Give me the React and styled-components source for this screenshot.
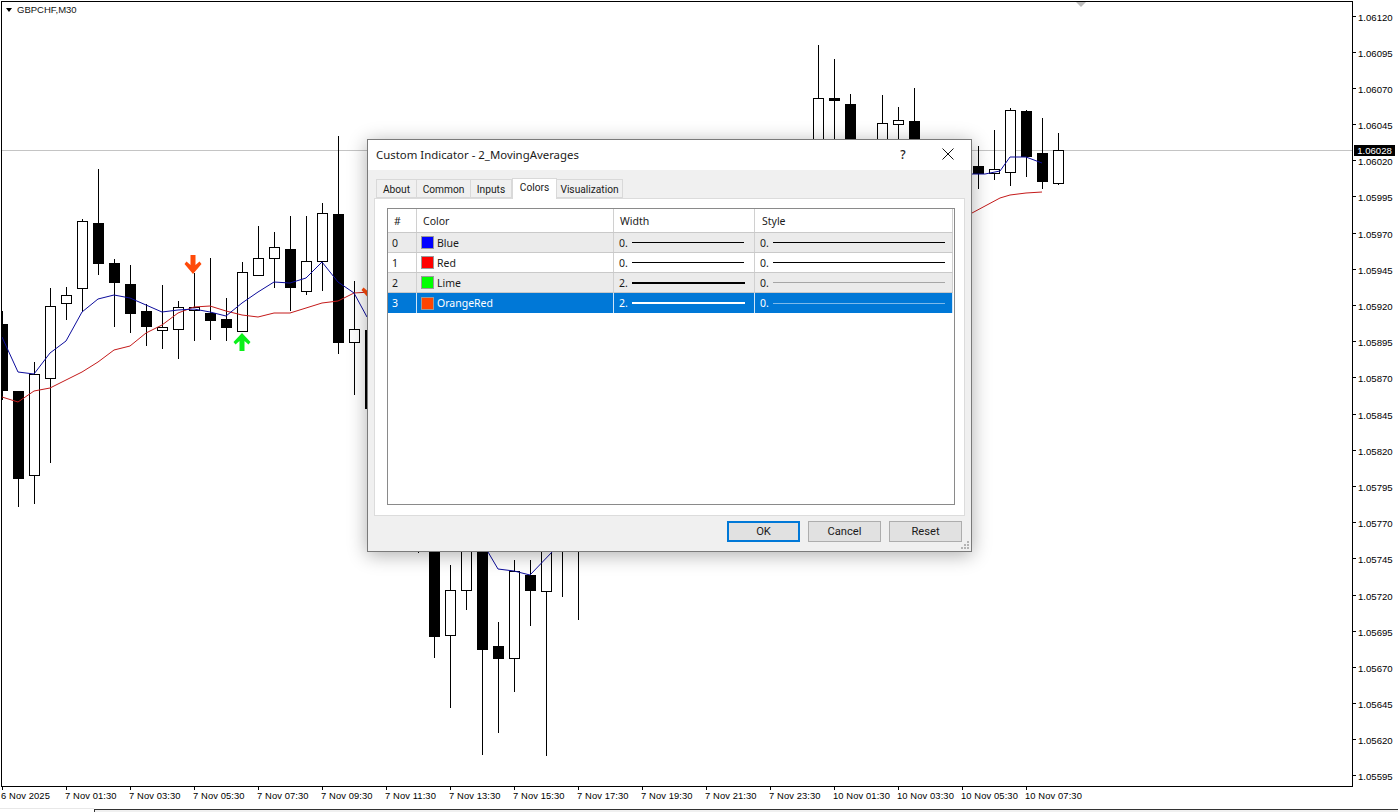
import React from 'react';
import styled, { createGlobalStyle } from 'styled-components';

const ChartFont = `"Liberation Sans", Arial, sans-serif`;
const DialogFont = `"Noto Sans", "Open Sans", sans-serif`;
const TabFont = `Roboto, "Noto Sans", sans-serif`;

const GlobalStyle = createGlobalStyle`
  html, body {
    margin: 0;
    padding: 0;
    background: #fff;
    overflow: hidden;
  }
`;

// x, high, body top, body bottom, low, filled
const candles = [
  [2, 311, 324, 391, 400, 1],
  [18, 391, 391, 479, 507, 1],
  [34, 362, 374, 475, 504, 0],
  [50, 288, 306, 378, 463, 0],
  [66, 287, 295, 303, 320, 0],
  [82, 219, 221, 288, 312, 0],
  [98, 169, 223, 264, 275, 1],
  [114, 259, 263, 283, 327, 1],
  [130, 265, 284, 314, 333, 1],
  [146, 304, 311, 327, 346, 1],
  [162, 285, 327, 330, 349, 0],
  [178, 301, 307, 329, 359, 0],
  [194, 273, 307, 310, 341, 0],
  [210, 258, 313, 321, 340, 1],
  [226, 298, 319, 328, 341, 1],
  [242, 262, 272, 331, 331, 0],
  [258, 226, 258, 275, 275, 0],
  [274, 232, 247, 258, 288, 0],
  [290, 216, 249, 288, 311, 1],
  [306, 216, 261, 291, 295, 0],
  [322, 203, 213, 261, 291, 0],
  [338, 136, 214, 343, 354, 1],
  [354, 281, 329, 342, 395, 0],
  [370, 320, 330, 409, 420, 1],
  [418, 500, 510, 520, 553, 0],
  [434, 500, 510, 637, 658, 1],
  [450, 565, 590, 635, 708, 0],
  [466, 500, 510, 590, 610, 0],
  [482, 500, 510, 650, 755, 1],
  [498, 622, 646, 659, 733, 1],
  [514, 560, 571, 658, 692, 0],
  [530, 560, 575, 591, 626, 1],
  [546, 500, 510, 591, 756, 0],
  [562, 500, 510, 520, 597, 0],
  [578, 500, 510, 520, 620, 0],
  [818, 45, 98, 200, 210, 0],
  [834, 59, 98, 101, 200, 1],
  [850, 94, 104, 200, 210, 1],
  [882, 95, 123, 200, 210, 0],
  [898, 107, 120, 124, 200, 0],
  [914, 88, 121, 200, 210, 1],
  [978, 146, 166, 174, 189, 1],
  [994, 130, 169, 173, 180, 0],
  [1010, 108, 110, 172, 186, 0],
  [1026, 110, 111, 157, 177, 1],
  [1042, 118, 153, 182, 189, 1],
  [1058, 133, 150, 183, 185, 0],
];

const blueLine =
  '2,337 18,372 34,374 50,353 66,341 82,312 98,299 114,295 130,298 146,305 162,312 178,310 194,309 210,312 226,316 242,303 258,292 274,282 290,283 306,278 322,262 338,282 354,293 367,317';
const blueLow = '488,552 498,569 514,571 530,575 553,551';
const blueRight = '972,174 985,174 1000,171 1010,157 1026,157 1042,163';
const redLine =
  '2,397 18,402 34,391 50,388 66,380 82,372 98,362 114,350 130,346 146,333 162,325 178,313 194,307 210,306 226,311 242,315 258,317 274,313 290,313 306,308 322,303 338,301 354,293 370,292';
const redRight = '972,213 1000,198 1010,195 1026,193 1042,192';

const prices = [
  '1.06120', '1.06095', '1.06070', '1.06045', '1.06020', '1.05995', '1.05970', '1.05945',
  '1.05920', '1.05895', '1.05870', '1.05845', '1.05820', '1.05795', '1.05770', '1.05745',
  '1.05720', '1.05695', '1.05670', '1.05645', '1.05620', '1.05595',
];

const times = [
  '6 Nov 2025', '7 Nov 01:30', '7 Nov 03:30', '7 Nov 05:30', '7 Nov 07:30', '7 Nov 09:30',
  '7 Nov 11:30', '7 Nov 13:30', '7 Nov 15:30', '7 Nov 17:30', '7 Nov 19:30', '7 Nov 21:30',
  '7 Nov 23:30', '10 Nov 01:30', '10 Nov 03:30', '10 Nov 05:30', '10 Nov 07:30',
];

const tabs = ['About', 'Common', 'Inputs', 'Colors', 'Visualization'];
const tabWidths = [41, 54, 41, 45, 66];

const rows = [
  { color: 'Blue', swatch: '#0000ff', width: '0.', style: '0.', weight: 1, thin: false },
  { color: 'Red', swatch: '#ff0000', width: '0.', style: '0.', weight: 1, thin: false },
  { color: 'Lime', swatch: '#00ff00', width: '2.', style: '0.', weight: 2, thin: true },
  { color: 'OrangeRed', swatch: '#ff4500', width: '2.', style: '0.', weight: 2, thin: true },
];

const Page = styled.div`
  position: relative;
  width: 1398px;
  height: 812px;
  padding: 1px 0 0 1px;
  box-sizing: border-box;
  display: flex;
  flex-direction: column;
  overflow: hidden;
  background: #fff;
  font-family: ${ChartFont};
`;

const ChartRow = styled.div`
  display: flex;
  height: 786px;
  flex: none;
`;

const Plot = styled.div`
  position: relative;
  width: 1352px;
  flex: none;
  box-sizing: border-box;
  border: 1px solid #000;
  svg {
    display: block;
  }
`;

const SymbolLabel = styled.div`
  position: absolute;
  left: 4px;
  top: 2px;
  display: flex;
  align-items: center;
  gap: 5px;
  font-size: 9.5px;
  line-height: 12px;
  color: #111;
`;

const SymbolArrow = styled.span`
  width: 0;
  height: 0;
  border-left: 3.5px solid transparent;
  border-right: 3.5px solid transparent;
  border-top: 4px solid #000;
`;

const PriceAxis = styled.div`
  display: flex;
  flex-direction: column;
  padding-top: 10.5px;
`;

const PriceLabel = styled.div`
  position: relative;
  flex: none;
  height: 36.2px;
  line-height: 12px;
  padding-left: 5px;
  font-size: 9.6px;
  color: #000;
  &::before {
    content: '';
    position: absolute;
    left: 0;
    top: 4px;
    width: 3px;
    height: 1px;
    background: #000;
  }
`;

const PriceMarker = styled.div`
  position: absolute;
  left: 1354px;
  top: 145px;
  width: 41px;
  height: 11px;
  background: #000;
  color: #fff;
  font-size: 9.6px;
  line-height: 11px;
  text-align: center;
`;

const TimeAxis = styled.div`
  display: flex;
  height: 21px;
  flex: none;
`;

const TimeLabel = styled.div`
  position: relative;
  width: 64px;
  flex: none;
  white-space: nowrap;
  padding-top: 3px;
  font-size: 9.4px;
  line-height: 12px;
  letter-spacing: 0.1px;
  color: #000;
  &::before {
    content: '';
    position: absolute;
    left: 1px;
    top: 0;
    width: 1px;
    height: 3px;
    background: #000;
  }
`;

const TabStrip = styled.div`
  display: flex;
  flex: 1;
  margin-left: -1px;
  background: #fff;
`;

const SheetTab = styled.div`
  width: 94px;
  flex: none;
  background: #fff;
  border-top: 1px solid #e8e8e8;
`;

const SheetRest = styled.div`
  flex: 1;
  margin-top: 1px;
  background: #f0f0f0;
  border-top: 1px solid #333;
  border-left: 1px solid #333;
`;

const Dialog = styled.div`
  position: absolute;
  left: 367px;
  top: 139px;
  width: 605px;
  height: 413px;
  box-sizing: border-box;
  display: flex;
  flex-direction: column;
  background: #f0f0f0;
  border: 1px solid #7a7a7a;
  box-shadow: 0 3px 18px rgba(0, 0, 0, 0.32);
  font-family: ${DialogFont};
  color: #1a1a1a;
`;

const TitleBar = styled.div`
  display: flex;
  align-items: center;
  height: 30px;
  flex: none;
  box-sizing: border-box;
  padding: 0 14px 2px 8px;
  background: #fff;
`;

const Title = styled.div`
  flex: 1;
  font-size: 11.4px;
  white-space: nowrap;
`;

const HelpButton = styled.div`
  width: 30px;
  font-size: 12px;
  font-weight: 500;
  text-align: center;
  margin-right: 24px;
`;

const CloseIcon = styled.svg`
  display: block;
  width: 12px;
  height: 12px;
  margin-right: 3px;
`;

const TabBar = styled.div`
  display: flex;
  align-items: flex-end;
  height: 28px;
  flex: none;
  padding-left: 8px;
  position: relative;
  z-index: 1;
`;

const Tab = styled.div`
  box-sizing: border-box;
  width: ${(p) => p.$width}px;
  height: ${(p) => (p.$active ? 21 : 19)}px;
  margin-bottom: ${(p) => (p.$active ? -1 : 0)}px;
  padding-top: ${(p) => (p.$active ? 1 : 2)}px;
  border: 1px solid #d9d9d9;
  border-bottom: ${(p) => (p.$active ? 'none' : '1px solid #d9d9d9')};
  border-left-width: ${(p) => (p.$first || p.$active ? 1 : 0)}px;
  background: ${(p) => (p.$active ? '#fff' : '#f0f0f0')};
  font-family: ${TabFont};
  font-size: 10.2px;
  line-height: 15px;
  text-align: center;
  white-space: nowrap;
`;

const TabPanel = styled.div`
  box-sizing: border-box;
  width: 591px;
  height: 318px;
  margin-left: 6px;
  padding: 9px 9px 10px 12px;
  background: #fff;
  border: 1px solid #dcdcdc;
  flex: none;
`;

const Table = styled.div`
  box-sizing: border-box;
  height: 297px;
  border: 1px solid #8a8a8a;
  background: #fff;
`;

const Row = styled.div`
  display: grid;
  grid-template-columns: 29px 197px 141px 198px;
  height: ${(p) => (p.$header ? 24 : 20)}px;
  box-sizing: border-box;
  border-bottom: ${(p) => (p.$last ? 'none' : '1px solid #c9c9c9')};
  width: 565px;
  background: ${(p) => (p.$selected ? '#0078d7' : p.$shaded ? '#ebebeb' : '#fff')};
  color: ${(p) => (p.$selected ? '#fff' : '#1a1a1a')};
`;

const Cell = styled.div`
  display: flex;
  align-items: center;
  min-width: 0;
  box-sizing: border-box;
  padding-left: ${(p) => p.$pad ?? 4}px;
  border-right: 1px solid ${(p) => (p.$selected ? '#cfe5f7' : '#d0d0d0')};
  font-size: 10.5px;
  white-space: nowrap;
`;

const Swatch = styled.span`
  box-sizing: border-box;
  width: 13px;
  height: 13px;
  flex: none;
  margin-right: 3px;
  background: ${(p) => p.$color};
  border: 1px solid #9a9a9a;
`;

const LineSample = styled.span`
  flex: none;
  margin-left: ${(p) => p.$gap}px;
  width: ${(p) => p.$width}px;
  height: ${(p) => p.$weight}px;
  background: ${(p) => p.$color};
`;

const Footer = styled.div`
  position: relative;
  flex: 1;
  display: flex;
  justify-content: flex-end;
  gap: 8px;
  padding: 5px 9px 0 0;
`;

const Button = styled.div`
  box-sizing: border-box;
  width: 73px;
  height: 21px;
  display: flex;
  align-items: center;
  justify-content: center;
  background: #e1e1e1;
  border: ${(p) => (p.$primary ? '2px solid #0078d7' : '1px solid #adadad')};
  font-family: ${TabFont};
  font-size: 11.2px;
`;

const Grip = styled.svg`
  position: absolute;
  right: 1px;
  bottom: 1px;
  width: 9px;
  height: 9px;
`;

const Candle = ({ c }) => {
  const [x, high, top, bottom, low, filled] = c;
  const cx = x + 0.5;
  return (
    <g shapeRendering="crispEdges">
      <line x1={cx} x2={cx} y1={high} y2={low} stroke="#000" />
      {filled ? (
        <rect x={cx - 5.5} y={top} width={11} height={bottom - top} fill="#000" />
      ) : (
        <rect x={cx - 5} y={top + 0.5} width={10} height={bottom - top} fill="#fff" stroke="#000" />
      )}
    </g>
  );
};

const DownArrow = ({ x, y }) => (
  <path
    transform={`translate(${x} ${y})`}
    d="M-2.5 0H2.5V10L6.5 6.5L8.5 9L0 19L-8.5 9L-6.5 6.5L-2.5 10Z"
    fill="#ff4a0a"
  />
);

const UpArrow = ({ x, y }) => (
  <path
    transform={`translate(${x} ${y})`}
    d="M-2.5 0H2.5V-10L6.5 -6.5L8.5 -9L0 -18L-8.5 -9L-6.5 -6.5L-2.5 -10Z"
    fill="#0bf01a"
  />
);

const Chart = () => (
  <svg width="1350" height="784" viewBox="2 2 1350 784">
    <line x1="2" x2="1352" y1="150.5" y2="150.5" stroke="#c4c4c4" />
    <polygon points="1076,2 1086,2 1081,7" fill="#bdbdbd" />
    {candles.map((c) => (
      <Candle key={c[0]} c={c} />
    ))}
    <g fill="none" strokeWidth="1">
      <polyline points={redLine} stroke="#c41a1a" />
      <polyline points={redRight} stroke="#c41a1a" />
      <polyline points={blueLine} stroke="#0c0c9c" />
      <polyline points={blueLow} stroke="#0c0c9c" />
      <polyline points={blueRight} stroke="#0c0c9c" />
    </g>
    <DownArrow x={193} y={255} />
    <DownArrow x={370} y={281} />
    <UpArrow x={242} y={351} />
  </svg>
);

const App = () => (
  <Page>
    <GlobalStyle />
    <ChartRow>
      <Plot>
        <Chart />
        <SymbolLabel>
          <SymbolArrow />
          GBPCHF,M30
        </SymbolLabel>
      </Plot>
      <PriceAxis>
        {prices.map((p) => (
          <PriceLabel key={p}>{p}</PriceLabel>
        ))}
      </PriceAxis>
    </ChartRow>
    <TimeAxis>
      {times.map((t) => (
        <TimeLabel key={t}>{t}</TimeLabel>
      ))}
    </TimeAxis>
    <TabStrip>
      <SheetTab />
      <SheetRest />
    </TabStrip>
    <PriceMarker>1.06028</PriceMarker>

    <Dialog>
      <TitleBar>
        <Title>Custom Indicator - 2_MovingAverages</Title>
        <HelpButton>?</HelpButton>
        <CloseIcon viewBox="0 0 12 12">
          <path d="M0.5 0.5L11.5 11.5M11.5 0.5L0.5 11.5" stroke="#111" strokeWidth="1" fill="none" />
        </CloseIcon>
      </TitleBar>
      <TabBar>
        {tabs.map((t, i) => (
          <Tab key={t} $width={tabWidths[i]} $first={i === 0} $active={t === 'Colors'}>
            {t}
          </Tab>
        ))}
      </TabBar>
      <TabPanel>
        <Table>
          <Row $header>
            <Cell $pad={6}>#</Cell>
            <Cell $pad={6}>Color</Cell>
            <Cell $pad={6}>Width</Cell>
            <Cell $pad={7}>Style</Cell>
          </Row>
          {rows.map((r, i) => {
            const selected = i === 3;
            const ink = selected ? '#fff' : '#000';
            return (
              <Row key={r.color} $shaded={i % 2 === 0} $selected={selected} $last={selected}>
                <Cell $selected={selected}>{i}</Cell>
                <Cell $selected={selected}>
                  <Swatch $color={r.swatch} />
                  {r.color}
                </Cell>
                <Cell $selected={selected} $pad={5}>
                  {r.width}
                  <LineSample $gap={4} $width={r.weight === 2 ? 113 : 112} $weight={r.weight} $color={ink} />
                </Cell>
                <Cell $selected={selected} $pad={5}>
                  {r.style}
                  <LineSample
                    $gap={4}
                    $width={172}
                    $weight={1}
                    $color={r.thin ? (selected ? '#7db9ea' : '#a6a6a6') : '#000'}
                  />
                </Cell>
              </Row>
            );
          })}
        </Table>
      </TabPanel>
      <Footer>
        <Button $primary>OK</Button>
        <Button>Cancel</Button>
        <Button>Reset</Button>
        <Grip viewBox="0 0 9 9">
          <g fill="#b4b4b4">
            <rect x="6" y="0" width="2" height="2" />
            <rect x="3" y="3" width="2" height="2" />
            <rect x="6" y="3" width="2" height="2" />
            <rect x="0" y="6" width="2" height="2" />
            <rect x="3" y="6" width="2" height="2" />
            <rect x="6" y="6" width="2" height="2" />
          </g>
        </Grip>
      </Footer>
    </Dialog>
  </Page>
);

export default App;
